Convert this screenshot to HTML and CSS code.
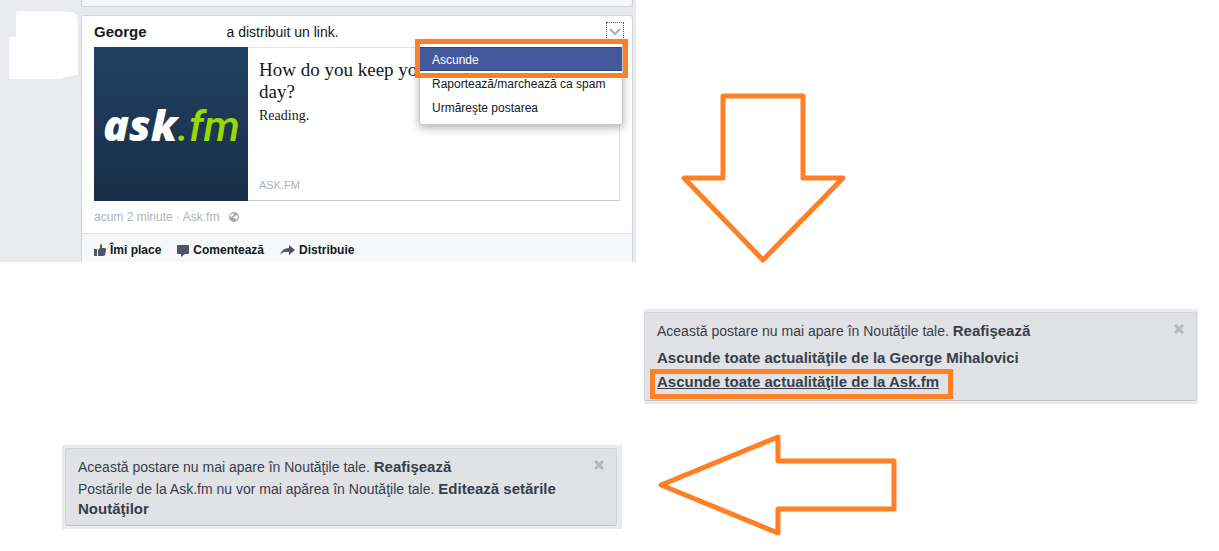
FILE: index.html
```
<!DOCTYPE html>
<html lang="ro">
<head>
<meta charset="utf-8">
<title>Ascunde postarea</title>
<link rel="stylesheet" href="styles.css">
</head>
<body>
<main class="board">
  <div class="column">
    <section class="feed">
      <div class="gutter">
        <svg class="blank-avatar" width="70" height="69" viewBox="0 0 70 69" aria-hidden="true"><path fill="#fff" d="M8 0H55L58 1H64L68 4L69 13V64L55 66L52 68H0V26H7V3Z"/></svg>
      </div>
      <div class="stream">
        <div class="card card-previous"></div>
        <article class="card">
          <header class="post-head">
            <a class="author" href="#">George</a>
            <span>a distribuit un link.</span>
            <div class="options">
              <button class="chevron" type="button" aria-label="Opţiuni">
                <svg width="12" height="8" viewBox="0 0 12 8"><path d="M1 1L6 6L11 1" fill="none" stroke="#a9adb6" stroke-width="2"/></svg>
              </button>
              <div class="menu">
                <button class="menu-item selected" type="button">Ascunde</button>
                <button class="menu-item" type="button">Raportează/marchează ca spam</button>
                <button class="menu-item" type="button">Urmăreşte postarea</button>
                <span class="mark mark-menu"></span>
              </div>
            </div>
          </header>
          <div class="attachment">
            <svg class="thumb" width="154" height="154" viewBox="0 0 154 154" role="img" aria-label="ask.fm">
              <defs><linearGradient id="sky" x1="0" y1="0" x2="0" y2="1"><stop offset="0" stop-color="#204262"/><stop offset="1" stop-color="#192e47"/></linearGradient></defs>
              <rect width="154" height="154" fill="url(#sky)"/>
              <text class="logo" x="9" y="94"><tspan class="logo-ask">ask</tspan><tspan class="logo-fm">.fm</tspan></text>
            </svg>
            <div class="summary">
              <h2 class="title">How do you keep you<br>day?</h2>
              <p class="excerpt">Reading.</p>
              <p class="domain">ASK.FM</p>
            </div>
          </div>
          <p class="meta"><span>acum 2 minute · Ask.fm</span>
            <svg width="10" height="10" viewBox="0 0 10 10" aria-hidden="true"><circle cx="5" cy="5" r="5" fill="#a4a9b3"/><path fill="#fff" d="M2 2L4 1L5 2L4 4L2 5L1 4ZM6 4L8 3L9 5L8 7L7 8L6 6L4 6Z"/></svg>
          </p>
          <footer class="actions">
            <button class="action" type="button"><svg width="12" height="13" viewBox="0 0 12 13"><path fill="#4e5665" d="M0 5H3V12H0ZM4 6L6 4V1Q6 0 7 0Q8 0 8 2V4H11Q12 4 12 6L11 11Q11 12 9 12H4Z"/></svg>Îmi place</button>
            <button class="action" type="button"><svg width="12" height="13" viewBox="0 0 12 13"><path fill="#4e5665" d="M1 1H11Q12 1 12 2V9Q12 10 11 10H8L4 13V10H1Q0 10 0 9V2Q0 1 1 1Z"/></svg>Comentează</button>
            <button class="action" type="button"><svg width="15" height="13" viewBox="0 0 15 13"><path fill="#4e5665" d="M9 1L15 6L9 11V8Q3 7 0 11Q2 4 9 4Z"/></svg>Distribuie</button>
          </footer>
        </article>
      </div>
    </section>
    <section class="notice-frame frame-left">
      <div class="notice notice-left">
        <button class="close" type="button" aria-label="Închide"><svg width="10" height="10" viewBox="0 0 10 10"><path d="M1 1L9 9M9 1L1 9" stroke="#b5b8bf" stroke-width="3"/></svg></button>
        <p class="line">Această postare nu mai apare în Noutăţile tale. <a href="#">Reafişează</a></p>
        <p class="detail">Postările de la Ask.fm nu vor mai apărea în Noutăţile tale. <a href="#">Editează setările Noutăţilor</a></p>
      </div>
    </section>
  </div>
  <div class="column column-right">
    <svg class="arrow-down" width="166" height="172" viewBox="0 0 166 172" aria-hidden="true"><path d="M42 5H122V87H162L82 169L3 87H42Z"/></svg>
    <section class="notice-frame frame-right">
      <div class="notice notice-right">
        <button class="close" type="button" aria-label="Închide"><svg width="10" height="10" viewBox="0 0 10 10"><path d="M1 1L9 9M9 1L1 9" stroke="#b5b8bf" stroke-width="3"/></svg></button>
        <p class="line">Această postare nu mai apare în Noutăţile tale. <a href="#">Reafişează</a></p>
        <p class="choice"><a href="#">Ascunde toate actualităţile de la George Mihalovici</a></p>
        <p class="choice"><a class="hovered" href="#">Ascunde toate actualităţile de la Ask.fm</a><span class="mark mark-choice"></span></p>
      </div>
    </section>
    <svg class="arrow-left" width="242" height="104" viewBox="0 0 242 104" aria-hidden="true"><path d="M3 52L120 4V28H236V76H120V100Z"/></svg>
  </div>
</main>
</body>
</html>
```
FILE: styles.css
```
* { box-sizing: border-box; }
body { margin: 0; background: #fff; color: #141823; font: 14px/18px "Liberation Sans", Arial, sans-serif; }
p, h2 { margin: 0; }
button { font: inherit; color: inherit; border: 0; padding: 0; background: none; }
a { color: inherit; font-size: 15px; font-weight: bold; text-decoration: none; }
svg { display: block; flex: none; }

.board { display: grid; grid-template-columns: 636fr 583fr; }
.column { display: flex; flex-direction: column; align-items: stretch; }

.feed { display: flex; background: #e9eaed; padding-right: 3px; }
.gutter { flex: none; width: 81px; padding: 11px 0 0 9px; }
.stream { flex: 1; display: flex; flex-direction: column; gap: 8px; }
.card { background: #fff; border: 1px solid #d3d6db; border-bottom: 0; border-radius: 3px 3px 0 0; }
.card-previous { height: 7px; background: #f6f7f9; border: 1px solid #d0d2d8; border-top: 0; border-radius: 0 0 3px 3px; }

.post-head { display: flex; align-items: center; gap: 80px; height: 31px; padding: 0 8px 0 12px; }
.options { position: relative; margin-left: auto; }
.chevron { display: flex; align-items: center; justify-content: center; width: 18px; height: 20px; border: 1px dotted #3b5998; }
.menu { position: absolute; z-index: 1; top: 19px; right: 1px; width: 204px; padding: 5px 0; background: #fff; border: 1px solid #c8c8c8; border-radius: 3px; box-shadow: 0 3px 8px rgba(0, 0, 0, .3); }
.menu-item { display: block; width: 100%; height: 24px; padding: 2px 12px 0; text-align: left; white-space: nowrap; font-size: 12px; line-height: 20px; border: solid transparent; border-width: 1px 0; }
.selected { background: #43599d; border-color: #2f477a; color: #fff; }
.mark { position: absolute; border: 5px solid #ff7f27; pointer-events: none; }
.mark-menu { inset: -3px -6px auto -5px; height: 39px; }

.attachment { display: flex; margin: 0 12px; border: solid #e2e3e6; border-width: 1px 1px 1px 0; border-bottom-color: #c9cacd; }
.thumb { margin: -1px 0; }
.logo { font-style: italic; font-size: 43px; }
.logo-ask { font-family: "Open Sans", sans-serif; fill: #fff; font-weight: 800; }
.logo-fm { font-family: Roboto, sans-serif; fill: #99d900; font-weight: 500; }
.summary { flex: 1; display: flex; flex-direction: column; padding: 11px 11px 6px; font-family: Georgia, "Liberation Serif", serif; }
.title { font-size: 19px; line-height: 22px; font-weight: normal; }
.excerpt { padding-top: 4px; font-size: 14px; }
.domain { margin-top: auto; font: 11px/18px "Liberation Sans", Arial, sans-serif; color: #adb2bb; }
.meta { display: flex; align-items: center; gap: 10px; height: 32px; padding: 0 12px; font-size: 12px; color: #adb2bb; }
.actions { display: flex; align-items: center; gap: 16px; height: 29px; padding: 4px 12px 0; background: #f6f7f9; border-top: 1px solid #dcdee3; }
.action { display: flex; align-items: center; gap: 4px; font-size: 12px; font-weight: bold; }

.notice-frame { background: #e9eaed; color: #373e4d; }
.frame-left { margin: 183px 14px 0 62px; padding: 3px 5px 3px 3px; }
.frame-right { margin: 46px 21px 0 8px; padding: 3px 1px 3px 0; }
.notice { padding: 9px 12px 6px; background: #e1e2e5; border: 1px solid #d3d5d9; border-bottom-color: #c0c3c9; border-radius: 3px; }
.close { float: right; padding: 2px 0; }
.line { padding-bottom: 3px; }
.detail { padding-right: 28px; line-height: 19px; }
.notice-right { padding-bottom: 7px; }
.notice-right .line { padding-bottom: 5px; }
.choice { position: relative; padding-top: 2px; line-height: 21px; }
.hovered { text-decoration: underline; }
.mark-choice { top: 0; left: -7px; width: 303px; height: 30px; }

.arrow-down, .arrow-left { fill: none; stroke: #ff7f27; stroke-width: 5; stroke-linejoin: round; }
.arrow-down { margin: 91px 0 0 45px; }
.arrow-left { margin: 29px 0 0 22px; }
```
